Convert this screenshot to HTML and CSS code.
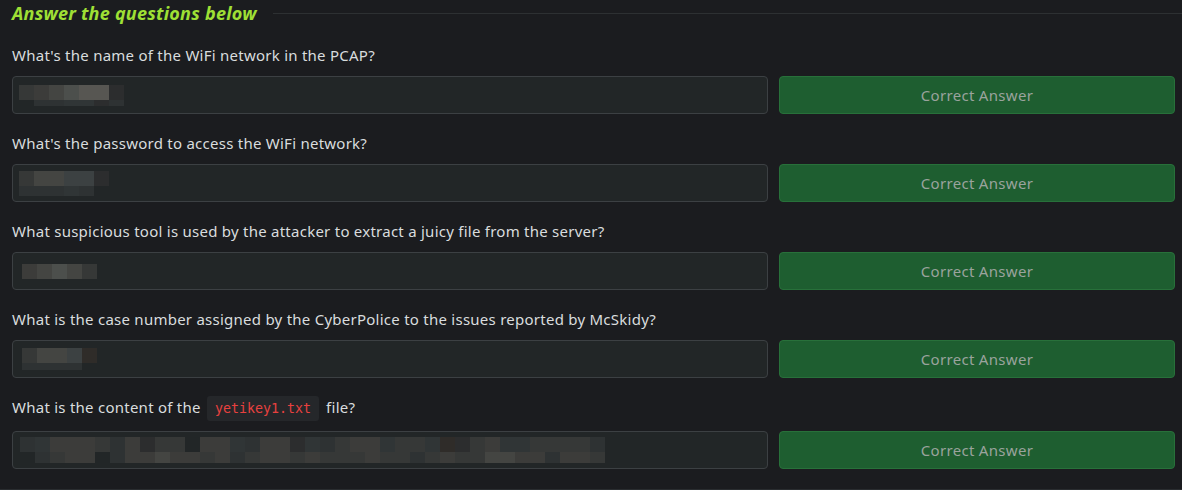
FILE: index.html
```html
<!DOCTYPE html>
<html lang="en">
<head>
<meta charset="utf-8">
<title>Answer the questions below</title>
<link rel="stylesheet" href="styles.css">
</head>
<body>
<section class="panel">
  <h2 class="panel-title"><span>Answer the questions below</span></h2>

  <div class="question">
    <p class="q-label">What's the name of the WiFi network in the PCAP?</p>
    <div class="qa-row">
      <div class="answer-box">
        <div class="mosaic">
          <div class="m-row r15"><span class="c3"></span><span class="c4"></span><span class="c5"></span><span class="c6"></span><span class="c7"></span><span class="c7"></span><span class="c1"></span></div>
          <div class="m-row r6"><span class="c0"></span><span class="c2"></span><span class="c2"></span><span class="c9"></span><span class="c9"></span><span class="c1"></span><span class="c2"></span></div>
        </div>
      </div>
      <button class="btn-correct">Correct Answer</button>
    </div>
  </div>

  <div class="question">
    <p class="q-label">What's the password to access the WiFi network?</p>
    <div class="qa-row">
      <div class="answer-box">
        <div class="mosaic">
          <div class="m-row r15"><span class="c3"></span><span class="c5"></span><span class="c5"></span><span class="c8"></span><span class="c8"></span><span class="c1"></span></div>
          <div class="m-row r10"><span class="c2"></span><span class="c2"></span><span class="c2"></span><span class="c9"></span><span class="c2"></span><span class="c0"></span></div>
        </div>
      </div>
      <button class="btn-correct">Correct Answer</button>
    </div>
  </div>

  <div class="question">
    <p class="q-label">What suspicious tool is used by the attacker to extract a juicy file from the server?</p>
    <div class="qa-row">
      <div class="answer-box pad-b">
        <div class="mosaic">
          <div class="m-row r15"><span class="c4"></span><span class="c5"></span><span class="c6"></span><span class="c5"></span><span class="c3"></span></div>
        </div>
      </div>
      <button class="btn-correct">Correct Answer</button>
    </div>
  </div>

  <div class="question">
    <p class="q-label">What is the case number assigned by the CyberPolice to the issues reported by McSkidy?</p>
    <div class="qa-row">
      <div class="answer-box pad-b">
        <div class="mosaic">
          <div class="m-row r15"><span class="c3"></span><span class="c5"></span><span class="c5"></span><span class="c8"></span><span class="c10"></span></div>
          <div class="m-row r7"><span class="c2"></span><span class="c2"></span><span class="c2"></span><span class="c2"></span></div>
        </div>
      </div>
      <button class="btn-correct">Correct Answer</button>
    </div>
  </div>

  <div class="question">
    <p class="q-label">What is the content of the <code class="inline-code">yetikey1.txt</code> file?</p>
    <div class="qa-row">
      <div class="answer-box pad-c">
        <div class="mosaic">
          <div class="m-row r15"><span class="c2"></span><span class="c9"></span><span class="c4"></span><span class="c4"></span><span class="c4"></span><span class="c3"></span><span class="c2"></span><span class="c4"></span><span class="c1"></span><span class="c3"></span><span class="c3"></span><span class="c0"></span><span class="c4"></span><span class="c4"></span><span class="c9"></span><span class="c2"></span><span class="c4"></span><span class="c4"></span><span class="c1"></span><span class="c9"></span><span class="c2"></span><span class="c3"></span><span class="c4"></span><span class="c4"></span><span class="c9"></span><span class="c3"></span><span class="c3"></span><span class="c9"></span><span class="c10"></span><span class="c1"></span><span class="c3"></span><span class="c4"></span><span class="c9"></span><span class="c9"></span><span class="c3"></span><span class="c3"></span><span class="c3"></span><span class="c3"></span><span class="c2"></span></div>
          <div class="m-row r11"><span class="c0"></span><span class="c2"></span><span class="c3"></span><span class="c4"></span><span class="c4"></span><span class="c0"></span><span class="c2"></span><span class="c4"></span><span class="c4"></span><span class="c5"></span><span class="c4"></span><span class="c4"></span><span class="c3"></span><span class="c4"></span><span class="c2"></span><span class="c3"></span><span class="c4"></span><span class="c4"></span><span class="c3"></span><span class="c4"></span><span class="c3"></span><span class="c3"></span><span class="c3"></span><span class="c4"></span><span class="c3"></span><span class="c3"></span><span class="c2"></span><span class="c3"></span><span class="c4"></span><span class="c3"></span><span class="c3"></span><span class="c5"></span><span class="c5"></span><span class="c4"></span><span class="c4"></span><span class="c2"></span><span class="c4"></span><span class="c4"></span><span class="c3"></span></div>
        </div>
      </div>
      <button class="btn-correct">Correct Answer</button>
    </div>
  </div>
</section>
</body>
</html>
```

FILE: styles.css
```css
html, body {
  margin: 0;
  padding: 0;
  background: #1b1c1f;
}

body {
  font-family: "Noto Sans", "Open Sans", sans-serif;
  color: #d9dcde;
  width: 1182px;
  height: 490px;
  overflow: hidden;
}

.panel {
  padding: 0 7px 0 12px;
  height: 489px;
  border-bottom: 1px solid #2a2d30;
  display: flex;
  flex-direction: column;
  gap: 18px;
}

.panel-title {
  margin: 0;
  height: 26px;
  display: flex;
  align-items: center;
  font-size: 18px;
  font-weight: 700;
  font-style: italic;
  letter-spacing: 0.25px;
  color: #9fe035;
  line-height: 26px;
}

.panel-title::after {
  content: "";
  flex: 1;
  height: 1px;
  background: #2d3032;
  margin-left: 16px;
  margin-right: -7px;
}

.question {
  display: flex;
  flex-direction: column;
  gap: 10px;
}

.q-label {
  margin: 0;
  font-size: 15px;
  letter-spacing: 0.25px;
  line-height: 22px;
  color: #d9dcde;
}

.inline-code {
  display: inline-block;
  font-family: "DejaVu Sans Mono", "Liberation Mono", monospace;
  font-size: 13.3px;
  letter-spacing: 0;
  line-height: 19px;
  padding: 3px 8px 3px 8px;
  margin: 0 3px 0 2px;
  border-radius: 3px;
  background: #25272a;
  color: #e8413f;
  vertical-align: 0px;
}

.qa-row {
  display: grid;
  grid-template-columns: 756px 396px;
  column-gap: 11px;
}

.answer-box {
  box-sizing: border-box;
  height: 38px;
  border: 1px solid #3c4043;
  border-radius: 4px;
  background: #222627;
  display: flex;
  align-items: center;
  padding-left: 6px;
}

.answer-box.pad-b {
  padding-left: 9px;
}

.answer-box.pad-c {
  padding-left: 7px;
}

.mosaic {
  display: flex;
  flex-direction: column;
}

.m-row {
  display: flex;
}

.m-row span {
  width: 15px;
  display: block;
}

.r15 span { height: 15px; }
.r11 span { height: 11px; }
.r10 span { height: 10px; }
.r7 span { height: 7px; }
.r6 span { height: 6px; }

.c0 { background: transparent; }
.c1 { background: #2c2d2e; }
.c2 { background: #2e3233; }
.c3 { background: #363837; }
.c4 { background: #3c3c3a; }
.c5 { background: #444542; }
.c6 { background: #4c4f4c; }
.c7 { background: #575652; }
.c8 { background: #3c4142; }
.c9 { background: #303536; }
.c10 { background: #2f2c29; }

.btn-correct {
  box-sizing: border-box;
  height: 38px;
  border: 1px solid #28703a;
  border-radius: 4px;
  background: #1e5e30;
  color: #9aa39d;
  font-family: "Noto Sans", "Open Sans", sans-serif;
  font-size: 15px;
  letter-spacing: 0.3px;
  padding: 0;
  cursor: default;
}
```
